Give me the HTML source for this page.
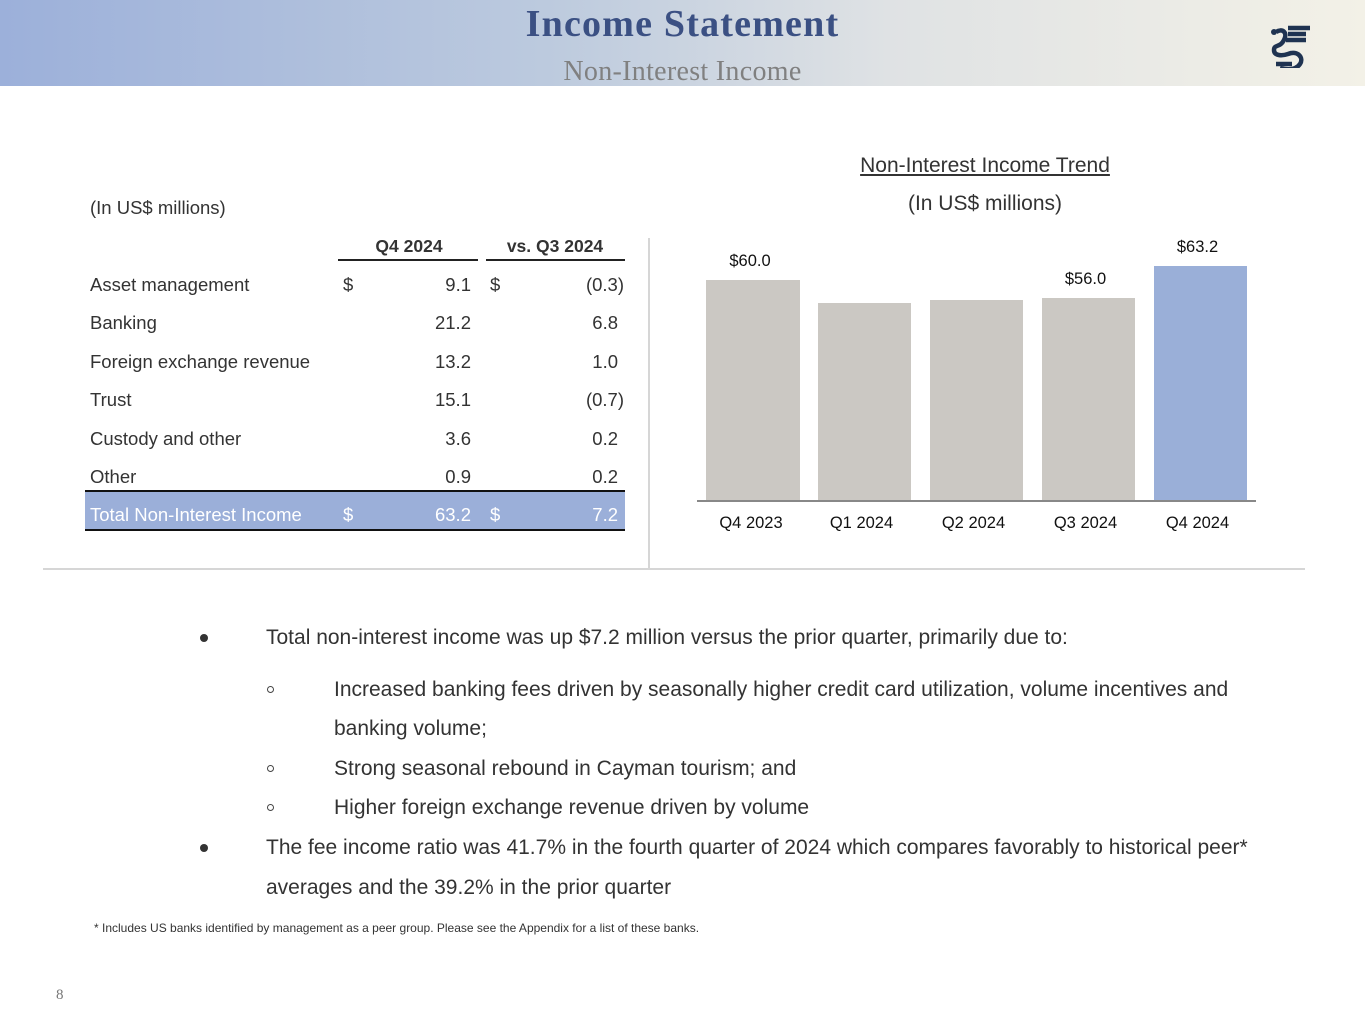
<!DOCTYPE html>
<html><head><meta charset="utf-8"><style>
body{margin:0;width:1365px;height:1024px;position:relative;background:#fff;font-family:"Liberation Sans",sans-serif;color:#333;overflow:hidden}
.a{position:absolute;white-space:nowrap}
.hdr{position:absolute;left:0;top:0;width:1365px;height:86px;background:linear-gradient(90deg,#9cb0da 0%,#bccade 40%,#dfe2e4 65%,#f3f1e7 100%)}
.t{font-size:16.5px;color:#333}
.l{font-size:18.5px}
.r{text-align:right}
.bar{position:absolute;background:#cbc8c3}
.b{font-size:21px;color:#333}
.o{position:absolute;width:5px;height:5px;border:1px solid #444;border-radius:50%}
.d{position:absolute;width:8px;height:8px;background:#333;border-radius:50%}
</style></head><body>
<div class="hdr"></div>
<div class="a" style="left:0;width:1365px;top:2px;text-align:center;font-family:'Liberation Serif',serif;font-weight:bold;font-size:38px;letter-spacing:1.2px;color:#3b5083">Income Statement</div>
<div class="a" style="left:0;width:1365px;top:56px;text-align:center;font-family:'Liberation Serif',serif;font-size:28px;letter-spacing:0.3px;color:#808080">Non-Interest Income</div>
<svg class="a" style="left:1266px;top:22px" width="48" height="46" viewBox="0 0 48 46"><g fill="none" stroke="#1f3351" stroke-width="4.5"><path d="M22 6h22M22 12h18M20 18h20"/><path d="M10 10c6-4 12 0 8 8-4 8-10 4-10 10 0 6 8 6 14 4 10-4 16 4 12 10-4 6-12 6-20 4"/><path d="M10 42h16"/></g><circle cx="8" cy="10" r="3" fill="#1f3351"/></svg>

<div class="a t l" style="left:90px;top:197px">(In US$ millions)</div>
<div class="a t" style="left:340px;width:138px;top:236px;text-align:center;font-weight:bold;font-size:17.5px">Q4 2024</div>
<div class="a t" style="left:486px;width:138px;top:236px;text-align:center;font-weight:bold;font-size:17.5px">vs. Q3 2024</div>
<div class="a" style="left:338px;top:259px;width:140px;border-top:2px solid #222"></div>
<div class="a" style="left:486px;top:259px;width:139px;border-top:2px solid #222"></div>

<div class="a t l" style="left:90px;top:274px">Asset management</div>
<div class="a t l" style="left:343px;top:274px">$</div><div class="a t l r" style="left:380px;width:91px;top:274px">9.1</div>
<div class="a t l" style="left:490px;top:274px">$</div><div class="a t l r" style="left:520px;width:104px;top:274px">(0.3)</div>
<div class="a t l" style="left:90px;top:312px">Banking</div>
<div class="a t l r" style="left:380px;width:91px;top:312px">21.2</div><div class="a t l r" style="left:520px;width:98px;top:312px">6.8</div>
<div class="a t l" style="left:90px;top:351px">Foreign exchange revenue</div>
<div class="a t l r" style="left:380px;width:91px;top:351px">13.2</div><div class="a t l r" style="left:520px;width:98px;top:351px">1.0</div>
<div class="a t l" style="left:90px;top:389px">Trust</div>
<div class="a t l r" style="left:380px;width:91px;top:389px">15.1</div><div class="a t l r" style="left:520px;width:104px;top:389px">(0.7)</div>
<div class="a t l" style="left:90px;top:428px">Custody and other</div>
<div class="a t l r" style="left:380px;width:91px;top:428px">3.6</div><div class="a t l r" style="left:520px;width:98px;top:428px">0.2</div>
<div class="a t l" style="left:90px;top:466px">Other</div>
<div class="a t l r" style="left:380px;width:91px;top:466px">0.9</div><div class="a t l r" style="left:520px;width:98px;top:466px">0.2</div>
<div class="a" style="left:85px;top:490px;width:540px;height:37px;background:#9bafd9;border-top:2px solid #111;border-bottom:2px solid #111"></div>
<div class="a t l" style="left:90px;top:504px;color:#fff">Total Non-Interest Income</div>
<div class="a t l" style="left:343px;top:504px;color:#fff">$</div><div class="a t l r" style="left:380px;width:91px;top:504px;color:#fff">63.2</div>
<div class="a t l" style="left:490px;top:504px;color:#fff">$</div><div class="a t l r" style="left:520px;width:98px;top:504px;color:#fff">7.2</div>

<div class="a" style="left:648px;top:238px;height:330px;border-left:2px solid #d6d6d6"></div>
<div class="a" style="left:43px;top:568px;width:1262px;border-top:2px solid #d6d6d6"></div>

<div class="a" style="left:735px;width:500px;top:154px;text-align:center;font-size:21px;color:#333;text-decoration:underline">Non-Interest Income Trend</div>
<div class="a" style="left:735px;width:500px;top:192px;text-align:center;font-size:21px;color:#333">(In US$ millions)</div>
<div class="bar" style="left:706px;top:280px;width:94px;height:221px"></div>
<div class="bar" style="left:818px;top:303px;width:93px;height:198px"></div>
<div class="bar" style="left:930px;top:300px;width:93px;height:201px"></div>
<div class="bar" style="left:1042px;top:298px;width:93px;height:203px"></div>
<div class="bar" style="left:1154px;top:266px;width:93px;height:235px;background:#9aafd8"></div>
<div class="a" style="left:697px;top:500px;width:559px;border-top:2px solid #888"></div>
<div class="a t" style="left:703px;width:94px;text-align:center;top:252px;color:#111">$60.0</div>
<div class="a t" style="left:1039px;width:93px;text-align:center;top:270px;color:#111">$56.0</div>
<div class="a t" style="left:1151px;width:93px;text-align:center;top:238px;color:#111">$63.2</div>
<div class="a t" style="left:706px;width:90px;text-align:center;top:514px;color:#111">Q4 2023</div>
<div class="a t" style="left:818px;width:87px;text-align:center;top:514px;color:#111">Q1 2024</div>
<div class="a t" style="left:930px;width:87px;text-align:center;top:514px;color:#111">Q2 2024</div>
<div class="a t" style="left:1042px;width:87px;text-align:center;top:514px;color:#111">Q3 2024</div>
<div class="a t" style="left:1154px;width:87px;text-align:center;top:514px;color:#111">Q4 2024</div>

<div class="d" style="left:200px;top:634px"></div>
<div class="a b" style="left:266px;top:626px">Total non-interest income was up $7.2 million versus the prior quarter, primarily due to:</div>
<div class="o" style="left:267px;top:686px"></div>
<div class="a b" style="left:334px;top:678px">Increased banking fees driven by seasonally higher credit card utilization, volume incentives and</div>
<div class="a b" style="left:334px;top:717px">banking volume;</div>
<div class="o" style="left:267px;top:765px"></div>
<div class="a b" style="left:334px;top:757px">Strong seasonal rebound in Cayman tourism; and</div>
<div class="o" style="left:267px;top:804px"></div>
<div class="a b" style="left:334px;top:796px">Higher foreign exchange revenue driven by volume</div>
<div class="d" style="left:200px;top:844px"></div>
<div class="a b" style="left:266px;top:836px">The fee income ratio was 41.7% in the fourth quarter of 2024 which compares favorably to historical peer*</div>
<div class="a b" style="left:266px;top:876px">averages and the 39.2% in the prior quarter</div>
<div class="a" style="left:94px;top:921px;font-size:12px;color:#333">* Includes US banks identified by management as a peer group. Please see the Appendix for a list of these banks.</div>
<div class="a" style="left:56px;top:987px;font-family:'Liberation Serif',serif;font-size:15px;color:#777">8</div>
</body></html>
